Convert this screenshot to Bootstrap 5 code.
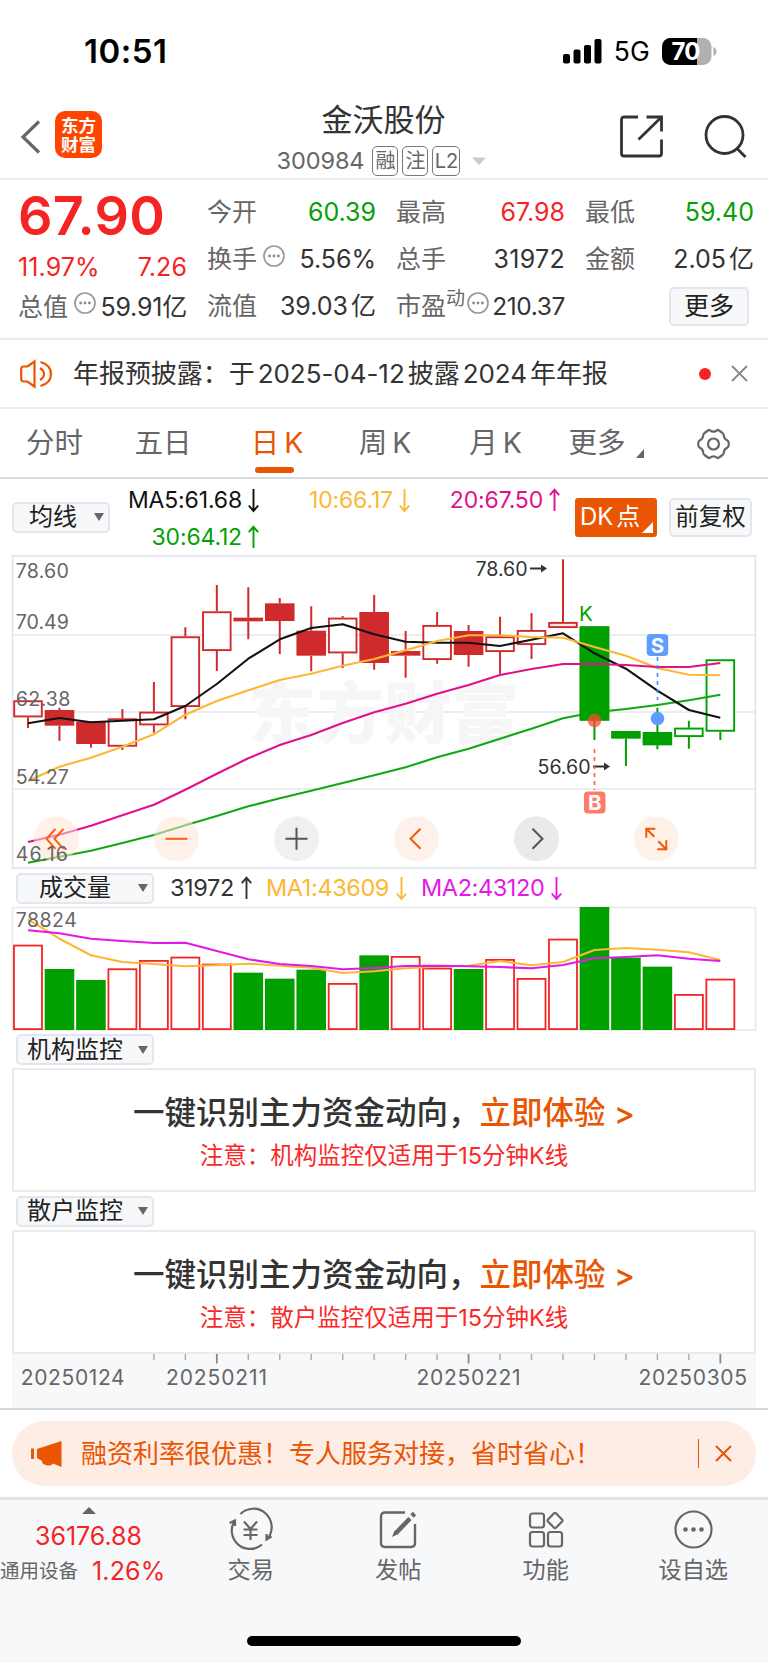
<!DOCTYPE html>
<html lang="zh-CN">
<head>
<meta charset="utf-8">
<meta name="viewport" content="width=device-width, initial-scale=1">
<title>金沃股份 300984</title>
<link href="https://cdn.jsdelivr.net/npm/bootstrap@5.3.0/dist/css/bootstrap.min.css" rel="stylesheet">
<style>
  body{font-family:Inter,"Noto Sans CJK SC",sans-serif;color:#333;background:#fff;width:768px;height:1663px;overflow:hidden;line-height:1;font-size:25px;white-space:nowrap}
  svg{display:block;flex:none;overflow:visible}
  svg text{font-family:Inter,"Noto Sans CJK SC",sans-serif}
  .up{color:#f52424}.down{color:#06a006}.muted{color:#666}.brand{color:#ea5504}
  .statusbar{height:95px;padding:7px 51px 0 84px}
  .clock{font-size:33px;font-weight:600;letter-spacing:.5px;color:#000;line-height:40px}
  .net{font-size:26.5px;color:#000;letter-spacing:.2px;margin:0 12px;line-height:36px}
  .titlebar{height:85px;border-bottom:2px solid #ececec;padding:0 21px 0 20px}
  .side{width:150px}
  .logo{width:47px;height:47px;border-radius:10px;background:#ff4400;color:#fff;font-size:17.5px;line-height:19px;font-weight:700}
  .stock{font-size:31px;line-height:36px}
  .code{font-size:23.5px;letter-spacing:-.1px;color:#666;height:30px}
  .tagbox{border:1.5px solid #777;border-radius:5px;height:30px;width:26px;font-size:20px;color:#666}
  .quotes{height:160px;border-bottom:2px solid #ebebeb;padding:9px 12.5px 0 18px;gap:20px}
  .qcol{width:169px}
  .qrow{height:47px}
  .tight{word-spacing:-4px}
  .price{font-size:54px;font-weight:600;height:54px;letter-spacing:.3px}
  .morebtn{width:80px;height:39px;border:2px solid #e3e6ee;border-radius:5px;background:#f7f8fa;color:#222}
  .notice{height:69px;border-bottom:2px solid #ececec;padding:0 20px 0 20px;font-size:26px}
  .dot{width:12px;height:12px;border-radius:50%;background:#f52424}
  .tabs{height:70px;border-bottom:2px solid #d9dbe3;display:grid;grid-template-columns:109px 108px 120px 96px 125px 78px 131px;font-size:28.5px;color:#666;word-spacing:-3px}
  .tabs>div{display:flex;align-items:center;justify-content:center;position:relative;padding-top:1px}
  .tabs .on{color:#ea5504}
  .tabs .on::after{content:"";position:absolute;bottom:4px;left:38px;width:39px;height:6px;border-radius:3px;background:#ea5504}
  .mabar{height:76px;padding:0 16px 0 12px}
  .magrid{display:grid;grid-template-columns:149px 151px 150px;grid-auto-rows:37px;width:450px;font-size:23px;letter-spacing:-.15px}
  .magrid>div{display:flex;align-items:center;justify-content:flex-end;gap:6px}
  .pick{background:#f7f8fa;border:2px solid #e3e6ee;border-radius:5px;height:31px;color:#222;font-size:24px}
  .tri{width:0;height:0;border:5px solid transparent;border-top:8px solid #666;border-bottom:0}
  .dk{width:82px;height:39px;background:#ea5504;color:#fff;border-radius:3px;font-size:24px;position:relative}
  .dk::after{content:"";position:absolute;right:4px;bottom:4px;border-left:11px solid transparent;border-bottom:11px solid #fff}
  .fq{width:83px;height:39px;font-size:23.5px}
  .pane{padding:0 12px}
  .panehead{height:38px;padding-left:16px}
  .promo{margin:0 12px;border:2px solid #ebebeb;height:124px;padding-top:25px}
  .promo h2{font-size:31.5px;font-weight:500;line-height:36px;margin:0 0 11px;color:#333}
  .promo p{font-size:23.5px;line-height:28px;margin:0;color:#fa2828}
  .axis{margin:0 12px;background:#f7f8fa;height:54px}
  .adwrap{border-top:2px solid #d5d8e0;height:89px;padding:11px 12px 0}
  .ad{height:65px;border-radius:33px;background:#fdede4;font-size:26px;color:#ea5504;padding:0 24px 0 19px}
  .dock{border-top:3px solid #e0e3e7;background:#f7f8fa;height:166px}
  .dockitem{width:147.5px;padding-top:10px;font-size:23.2px;color:#666}
  .index{width:177px}
  .homebar{width:274px;height:10px;border-radius:5px;background:#000}
</style>
</head>
<body>
<svg width="0" height="0" class="position-absolute">
  <defs>
    <g id="aDown" fill="none" stroke="currentColor" stroke-width="1.9"><path d="M5.5 0V22M.8 16.5L5.5 22L10.2 16.5"/></g>
    <g id="aUp" fill="none" stroke="currentColor" stroke-width="1.9"><path d="M5.5 22V.6M.8 6.2L5.5 .8L10.2 6.2"/></g>
    <g id="dots"><circle cx="11" cy="11" r="10" fill="none" stroke="#999" stroke-width="1.7"/><circle cx="6.6" cy="11" r="1.4" fill="#888"/><circle cx="11" cy="11" r="1.4" fill="#888"/><circle cx="15.4" cy="11" r="1.4" fill="#888"/></g>
  </defs>
</svg>

<div class="statusbar d-flex align-items-center">
  <span class="clock me-auto">10:51</span>
  <svg width="39" height="25" viewBox="0 0 39 25"><rect x="0" y="15" width="7" height="9.5" rx="2"/><rect x="10.5" y="10.5" width="7" height="14" rx="2"/><rect x="21" y="6" width="7" height="18.5" rx="2"/><rect x="31.500" y="0" width="7" height="24.500" rx="2"/></svg>
  <span class="net">5G</span>
  <svg width="55" height="27" viewBox="0 0 55 27"><clipPath id="bat"><rect width="49.500" height="27" rx="8.500"/></clipPath><g clip-path="url(#bat)"><rect width="50" height="27" fill="#b0b0b0"/><rect width="35" height="27"/></g><path d="M51.500 9Q54.500 10.500 54.500 13.500T51.500 18Z" fill="#b0b0b0"/><text x="24" y="22" font-size="24" font-weight="700" fill="#fff" text-anchor="middle" textLength="29">70</text></svg>
</div>

<header class="titlebar d-flex align-items-center justify-content-between">
  <div class="side d-flex align-items-center" style="gap:15px">
    <svg width="20" height="34" viewBox="0 0 20 34"><path d="M19 1.500L3 17L19 32.500" fill="none" stroke="#666" stroke-width="3.200"/></svg>
    <div class="logo d-flex flex-column align-items-center justify-content-center mb-1"><span>东方</span><span>财富</span></div>
  </div>
  <div class="text-center pt-1">
    <div class="stock pb-1">金沃股份</div>
    <div class="code d-flex align-items-center justify-content-center mt-1">300984
      <span class="tagbox d-flex align-items-center justify-content-center ms-2">融</span>
      <span class="tagbox d-flex align-items-center justify-content-center ms-1">注</span>
      <span class="tagbox d-flex align-items-center justify-content-center ms-1" style="width:28px">L2</span>
      <svg class="ms-2" width="22" height="8" viewBox="0 0 22 8"><path d="M4 .5H18L11 8Z" fill="#ccc"/></svg>
    </div>
  </div>
  <div class="side d-flex align-items-center justify-content-end" style="gap:41px">
    <svg width="43" height="43" viewBox="0 0 43 43" fill="none" stroke="#333" stroke-width="2.800"><path d="M18 2H4Q1.500 2 1.500 4.500V38.500Q1.500 41 4 41H39Q41.500 41 41.500 38.500V24.500M26.500 2H41.500V16.500M41 2.500L18.500 24.500"/></svg>
    <svg width="43" height="43" viewBox="0 0 43 43" fill="none" stroke="#333" stroke-width="2.800"><circle cx="20.500" cy="20" r="18.500"/><path d="M33 33.500L41.500 42"/></svg>
  </div>
</header>

<section class="quotes d-flex">
  <div class="qcol up">
    <div class="price d-flex align-items-center">67.90</div>
    <div class="d-flex align-items-center justify-content-between" style="height:48px;letter-spacing:.1px"><span>11.97%</span><span>7.26</span></div>
    <div class="d-flex align-items-center" style="height:32px"><span class="muted">总值</span><svg class="mb-2" style="margin-left:6px" width="22" height="22"><use href="#dots"/></svg><span class="ms-auto" style="color:#333;letter-spacing:-.2px">59.91亿</span></div>
  </div>
  <div class="qcol">
    <div class="qrow d-flex align-items-center justify-content-between"><span class="muted">今开</span><span class="down">60.39</span></div>
    <div class="qrow d-flex align-items-center"><span class="muted">换手</span><svg class="mb-2" style="margin-left:6px" width="22" height="22"><use href="#dots"/></svg><span class="ms-auto">5.56%</span></div>
    <div class="qrow d-flex align-items-center justify-content-between"><span class="muted">流值</span><span class="tight">39.03 亿</span></div>
  </div>
  <div class="qcol">
    <div class="qrow d-flex align-items-center justify-content-between"><span class="muted">最高</span><span class="up">67.98</span></div>
    <div class="qrow d-flex align-items-center justify-content-between"><span class="muted">总手</span><span style="letter-spacing:.3px">31972</span></div>
    <div class="qrow d-flex align-items-center"><span class="muted">市盈</span><span class="muted mb-3" style="font-size:19px">动</span><svg class="mb-2" style="margin-left:2px" width="22" height="22"><use href="#dots"/></svg><span class="ms-auto" style="font-size:24.5px;letter-spacing:-.4px">210.37</span></div>
  </div>
  <div class="qcol">
    <div class="qrow d-flex align-items-center justify-content-between"><span class="muted">最低</span><span class="down">59.40</span></div>
    <div class="qrow d-flex align-items-center justify-content-between"><span class="muted">金额</span><span class="tight">2.05 亿</span></div>
    <div class="qrow d-flex align-items-center justify-content-end" style="padding-right:5px"><span class="morebtn d-flex align-items-center justify-content-center">更多</span></div>
  </div>
</section>

<section class="notice d-flex align-items-center">
  <svg width="34" height="28" viewBox="0 0 34 28" fill="none" stroke="#ea5504" stroke-width="2.200"><path d="M14.500 1.500V26.500L7.500 21.500H3.500Q1.200 21.500 1.200 19V9Q1.200 6.500 3.500 6.500H7.500ZM20 8Q24 10.500 24 14T20 20M20.500 2Q31 5 31 14T20.500 26"/></svg>
  <span class="me-auto" style="margin-left:19px;letter-spacing:-.05px;word-spacing:-4.2px">年报预披露：于 2025-04-12 披露 2024 年年报</span>
  <span class="dot"></span>
  <svg style="margin-left:20px" width="17" height="17" viewBox="0 0 17 17"><path d="M1 1L16 16M16 1L1 16" stroke="#888" stroke-width="1.800"/></svg>
</section>

<nav class="tabs">
  <div>分时</div><div>五日</div><div class="on">日 K</div><div>周 K</div><div>月 K</div>
  <div>更多<svg class="position-absolute" style="right:-8px;bottom:19px" width="8" height="9"><path d="M8 0V9H0Z" fill="#666"/></svg></div>
  <div style="padding-left:23px"><svg width="33" height="32" viewBox="0 0 33 32" fill="none" stroke="#666" stroke-width="2.200" stroke-linejoin="round"><path d="M11 2.500Q12 1.500 13 2.300Q16.500 5 20 2.300Q21 1.500 22 2.500L25.500 5Q26.800 6 26.800 7.500Q27 11 30.500 12.500Q31.800 13.200 31.800 16T30.500 19.500Q27 21 26.800 24.500Q26.800 26 25.500 27L22 29.500Q21 30.500 20 29.700Q16.500 27 13 29.700Q12 30.500 11 29.500L7.500 27Q6.200 26 6.200 24.500Q6 21 2.500 19.500Q1.200 18.800 1.200 16T2.500 12.500Q6 11 6.200 7.500Q6.200 6 7.500 5Z"/><circle cx="16.500" cy="16" r="5.500"/></svg></div>
</nav>

<section class="mabar d-flex align-items-center">
  <span class="pick d-flex align-items-center justify-content-between flex-shrink-0" style="width:98px;padding:0 4px 0 15px">均线<i class="tri"></i></span>
  <div class="magrid flex-shrink-0 align-self-start" style="padding-top:3px">
    <div style="color:#111">MA5:61.68<svg width="11" height="23"><use href="#aDown"/></svg></div>
    <div style="color:#fdb735">10:66.17<svg width="11" height="23"><use href="#aDown"/></svg></div>
    <div style="color:#e0118b">20:67.50<svg width="11" height="23"><use href="#aUp"/></svg></div>
    <div style="color:#06a006">30:64.12<svg width="11" height="23"><use href="#aUp"/></svg></div>
  </div>
  <span class="dk tight d-flex align-items-center flex-shrink-0" style="margin-left:15px;padding-left:5px">DK 点</span>
  <span class="pick fq d-flex align-items-center justify-content-center flex-shrink-0 ms-auto">前复权</span>
</section>

<section class="pane"><svg id="kline" width="744" height="314" viewBox="12 555 744 314"></svg></section>

<div class="panehead d-flex align-items-center">
  <span class="pick d-flex align-items-center justify-content-between" style="width:138px;padding:0 4px 0 21px">成交量<i class="tri"></i></span>
  <span class="d-flex align-items-center" style="font-size:23.5px;letter-spacing:-.4px">
    <span class="d-flex align-items-center" style="gap:7px;margin-left:16px;width:96px">31972<svg width="11" height="23"><use href="#aUp"/></svg></span>
    <span class="d-flex align-items-center" style="gap:7px;color:#fdb735;width:155px">MA1:43609<svg width="11" height="23"><use href="#aDown"/></svg></span>
    <span class="d-flex align-items-center" style="gap:7px;color:#e01be8">MA2:43120<svg width="11" height="23"><use href="#aDown"/></svg></span>
  </span>
</div>
<section class="pane"><svg id="volume" width="744" height="124" viewBox="12 907 744 124"></svg></section>

<div class="panehead d-flex align-items-center" style="height:37px"><span class="pick d-flex align-items-center justify-content-between" style="width:138px;padding:0 4px 0 9px">机构监控<i class="tri"></i></span></div>
<section class="promo text-center"><h2>一键识别主力资金动向，<span class="brand">立即体验 &gt;</span></h2><p>注意：机构监控仅适用于15分钟K线</p></section>
<div class="panehead d-flex align-items-center" style="height:38px"><span class="pick d-flex align-items-center justify-content-between" style="width:138px;padding:0 4px 0 9px">散户监控<i class="tri"></i></span></div>
<section class="promo text-center"><h2>一键识别主力资金动向，<span class="brand">立即体验 &gt;</span></h2><p>注意：散户监控仅适用于15分钟K线</p></section>

<div class="axis"><svg id="timeline" width="744" height="54" viewBox="12 1354 744 54"></svg></div>

<div class="adwrap">
  <div class="ad d-flex align-items-center">
    <svg width="31" height="26" viewBox="0 0 31 26" fill="#ea5504"><rect x="0" y="7.500" width="3" height="10.500"/><path d="M6 8L30.500 0V26L22 22.500Q20 25.500 15 24Q11 23.500 11 20L6 17Z"/></svg>
    <span class="me-auto" style="margin-left:19px">融资利率很优惠！专人服务对接，省时省心！</span>
    <span style="width:1.500px;height:29px;background:#ea5504"></span>
    <svg style="margin-left:16px" width="17" height="17" viewBox="0 0 17 17"><path d="M1 1L16 16M16 1L1 16" stroke="#ea5504" stroke-width="2"/></svg>
  </div>
</div>

<footer class="dock d-flex flex-column align-items-center">
  <div class="d-flex w-100" style="height:136px">
    <div class="index text-center up">
      <svg class="mx-auto" style="margin-top:7px" width="14" height="7"><path d="M7 0L14 7H0Z" fill="#666"/></svg>
      <div style="margin-top:10px">36176.88</div>
      <div class="d-flex align-items-center" style="margin-top:10px"><span class="muted" style="font-size:19.500px">通用设备</span><span style="margin-left:14px;letter-spacing:.15px">1.26%</span></div>
    </div>
    <div class="dockitem d-flex flex-column align-items-center">
      <svg width="43" height="39" viewBox="0 0 43 39" fill="none" stroke="#666" stroke-width="2.200"><path d="M11.500 4A18.300 18.300 0 0 1 39 28M42.500 26.500L37.500 29.500L37.500 24M33 34.500A18.300 18.300 0 0 1 5.500 11M.5 13L6 10.500V16M15 11.500L21.500 19L28 11.500M21.500 19V30M14.500 19.500H28.500M14.500 25H28.500"/></svg>
      <span style="margin-top:10px">交易</span></div>
    <div class="dockitem d-flex flex-column align-items-center">
      <svg width="38" height="39" viewBox="0 0 38 39" fill="none" stroke="#666" stroke-width="2.400"><path d="M26 2.500H6Q2 2.500 2 6.500V33Q2 37 6 37H32Q36 37 36 33V14"/><path d="M33 6L35.500 3.500M31 8.500L17 23" stroke-width="4.600"/><path d="M15.500 20.500L13 27L19.500 24Z" fill="#666" stroke="none"/></svg>
      <span style="margin-top:10px">发帖</span></div>
    <div class="dockitem d-flex flex-column align-items-center">
      <svg width="36" height="39" viewBox="0 0 36 39" fill="none" stroke="#666" stroke-width="2.200"><rect x="2" y="3.500" width="14" height="14" rx="2.500"/><rect x="2" y="22" width="14" height="14.500" rx="2.500"/><rect x="20" y="22" width="14" height="14.500" rx="2.500"/><path d="M25.800 3.500Q27 2.300 28.200 3.500L34 9.400Q35 10.500 34 11.600L28.200 17.500Q27 18.700 25.800 17.500L20 11.600Q19 10.500 20 9.400Z"/></svg>
      <span style="margin-top:10px">功能</span></div>
    <div class="dockitem d-flex flex-column align-items-center">
      <svg width="39" height="39" viewBox="0 0 39 39"><circle cx="19.500" cy="19.500" r="18" fill="none" stroke="#666" stroke-width="2.200"/><g fill="#666"><circle cx="11.500" cy="19.500" r="2.300"/><circle cx="19.500" cy="19.500" r="2.300"/><circle cx="27.500" cy="19.500" r="2.300"/></g></svg>
      <span style="margin-top:10px">设自选</span></div>
  </div>
  <div class="homebar"></div>
</footer>

<script>
const X0 = 28, STEP = 31.47, W = 29.6;
const cx = i => X0 + STEP * i;
const RED = '#d02b2c', GREEN = '#00a000';

/* One candle per day: style (h hollow, f filled), colour, high, body top, body bottom, low; y in thirds of a pixel */
const candles = [
 'h r 481 481 532 564','f r 503 510 557 602','f r 545 545 612 623','h r 507 535 620 630','h r 426 515 556 578',
 'h r 262 289 501 538','h r 135 214 333 393','f r 142 233 244 298','f r 174 190 243 342','f r 199 272 347 394',
 'h r 228 233 340 384','f r 165 216 369 389','f r 273 333 347 413','h r 216 255 360 371','f r 255 273 345 380',
 'h r 230 289 336 401','h r 219 270 315 357','h r 58 246 264 264','f g 258 259 542 600','f g 573 573 596 678',
 'f g 503 576 616 628','h g 542 563 591 626','h g 358 358 575 600'];
const averages = [
 ['#111',    [550,534,547,542,538,498,432,356,298,264,253,283,305,308,308,318,299,280,340,386,452,510,533]],
 ['#fdb735', [723,680,653,620,583,524,483,451,420,401,377,357,331,303,286,286,291,293,321,347,384,404,406]],
 ['#e0118b', [906,884,857,826,794,749,701,655,615,585,549,517,491,461,435,405,387,372,372,375,381,381,369]],
 ['#12a812', [968,950,932,909,885,856,828,799,775,752,729,706,682,652,626,596,566,535,517,507,495,481,464]]];
const volumes = 'h254 g327 g360 h325 h300 h290 h311 g338 g356 g329 h369 g286 h288 h323 g327 h297 h354 h236 g141 g293 g320 h402 h356'.split(' ');
const volAverages = [
 ['#fdb735', [178,236,286,306,312,319,316,311,317,323,339,334,325,320,317,303,316,306,270,264,269,277,300]],
 ['#e01be8', [211,220,236,243,249,248,273,298,312,318,328,324,318,317,319,321,325,315,295,291,286,296,303]]];

const line = (base, [color, v]) =>
  `<polyline fill="none" stroke="${color}" stroke-width="2.1" stroke-linejoin="round" points="${v.map((y, i) => cx(i).toFixed(1) + ',' + (base + y / 3).toFixed(1)).join(' ')}"/>`;
const label = (x, y, len, s, fill = '#666') =>
  `<text x="${x}" y="${y}" font-size="19.6" fill="${fill}" textLength="${len}">${s}</text>`;

let k = '<rect x="12.5" y="556" width="743" height="312" fill="#fff" stroke="#e2e4ea" stroke-width="1.6"/>';
[635, 712, 789].forEach(y => k += `<path d="M13 ${y}H755" stroke="#ebedf3" stroke-width="1.8"/>`);
k += '<text x="249" y="738" font-size="67" font-weight="900" fill="#f6f6f6" textLength="270">东方财富</text>';
candles.forEach((c, i) => {
  const [kind, col, ...v] = c.split(' ');
  const [hi, top, bot, lo] = v.map(n => 540 + n / 3), color = col === 'r' ? RED : GREEN, x = cx(i);
  k += `<path d="M${x} ${hi}V${top}M${x} ${bot}V${lo}" stroke="${color}" stroke-width="2"/>`;
  k += kind === 'f'
    ? `<rect x="${x - W / 2}" y="${top}" width="${W}" height="${bot - top}" fill="${color}"/>`
    : `<rect x="${x - W / 2 + 1}" y="${top + .9}" width="${W - 2}" height="${bot - top - 1.8}" fill="${i === 17 ? '#fbe9e9' : '#fff'}" stroke="${color}" stroke-width="1.9"/>`;
});
/* the 30-day line runs behind the tall sell candle */
k += line(540, averages[3]);
k += `<rect x="${cx(18) - W / 2}" y="626.500" width="${W}" height="94" fill="${GREEN}"/>`;
averages.slice(0, 3).forEach(a => k += line(540, a));
k += label(15.8, 578, 53, '78.60') + label(15.8, 628.500, 53, '70.49') + label(15.8, 705.500, 54.500, '62.38')
   + label(15.8, 783.500, 53, '54.27');
k += label(475.5, 575.500, 52, '78.60', '#333') + label(537.5, 773.500, 53, '56.60', '#333');
k += '<path d="M530 568.500H543M593 766.500H606" stroke="#333" stroke-width="1.8"/><path d="M541 564.500L547 568.500L541 572.500ZM604 762.500L610 766.500L604 770.500Z" fill="#333"/>';
k += '<text x="579" y="621" font-size="20.500" fill="#00a000">K</text>';
k += '<path d="M594.500 749V790" stroke="#ff5a45" stroke-width="1.6" stroke-dasharray="4 4"/><circle cx="594.500" cy="720.500" r="6.800" fill="#ff4a30" fill-opacity=".75"/>';
k += '<path d="M657.500 657V700" stroke="#3f8cff" stroke-width="1.6" stroke-dasharray="4 4"/><circle cx="657.500" cy="718.500" r="6.800" fill="#5d9dff"/>';
k += '<rect x="584" y="791.500" width="21.500" height="22" rx="4" fill="#ff7a68"/><text x="594.700" y="810" font-size="20.500" font-weight="700" fill="#fff" text-anchor="middle">B</text>';
k += '<rect x="646.700" y="634" width="21.500" height="22" rx="4" fill="#5d9dff"/><text x="657.500" y="652.500" font-size="20.500" font-weight="700" fill="#fff" text-anchor="middle">S</text>';
/* chart controls */
const icons = [
 [56.5, '#ffe3d6', '#ff5a0c', 'M-1 -10L-10 0L-1 10M7 -10L-2 0L7 10'],
 [176.5, '#ffe3d6', '#ff5a0c', 'M-11 0H11'],
 [296.5, '#e4e4e4', '#555', 'M-11 0H11M0 -11V11'],
 [416.5, '#fde3d8', '#f5570a', 'M4 -10L-6 0L4 10'],
 [536.5, '#d9d9d9', '#555', 'M-4 -10L6 0L-4 10'],
 [656.3, '#ffe3d6', '#f5570a', 'M-1 -10H-10V-1M-10 -10L-2 -2M1 10.500H10V1.500M10 10.500L2 2.500']];
icons.forEach(([x, bg, fg, d]) => k += `<g transform="translate(${x} 838.800)"><circle r="22.500" fill="${bg}" fill-opacity=".55"/><path d="${d}" fill="none" stroke="${fg}" stroke-width="2"/></g>`);
k += label(15.8, 860.500, 52, '46.16');
document.getElementById('kline').innerHTML = k;

let v = '<rect x="12.5" y="907.500" width="743" height="122.500" fill="#fff" stroke="#e8e8ea" stroke-width="1.6"/>';
volumes.forEach((s, i) => {
  const top = 860 + (+s.slice(1)) / 3, h = 1030 - top, x = cx(i) - W / 2;
  v += s[0] === 'g'
    ? `<rect x="${x}" y="${top}" width="${W}" height="${h}" fill="${GREEN}"/>`
    : `<rect x="${x + .8}" y="${top + .9}" width="${W - 1.6}" height="${h - 1.8}" fill="#fff" stroke="#f52424" stroke-width="1.8"/>`;
});
volAverages.forEach(a => v += line(860, a));
v += label(15.8, 926.500, 61, '78824');
document.getElementById('volume').innerHTML = v;

let t = '';
for (let i = 4; i <= 22; i++) {
  const major = i % 8 === 6;
  t += `<path d="M${cx(i)} 1354V${major ? 1363.5 : 1360}" stroke="${major ? '#888' : '#aaa'}" stroke-width="${major ? 1.8 : 1.4}"/>`;
}
[[20.7, 104, '20250124'], [166, 101, '20250211'], [416.5, 104, '20250221'], [638.5, 108.5, '20250305']]
  .forEach(([x, len, s]) => t += `<text x="${x}" y="1385" font-size="21" fill="#666" textLength="${len}">${s}</text>`);
document.getElementById('timeline').innerHTML = t;
</script>
<script src="https://cdn.jsdelivr.net/npm/bootstrap@5.3.0/dist/js/bootstrap.bundle.min.js"></script>
</body>
</html>
